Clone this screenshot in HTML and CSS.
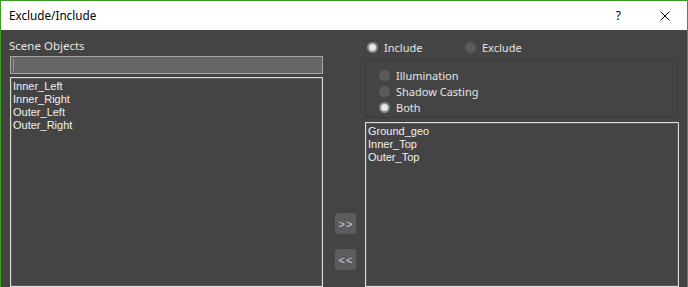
FILE: index.html
```html
<!DOCTYPE html>
<html lang="en">
<head>
    <meta charset="UTF-8">
    <title>Exclude/Include</title>
    <link rel="stylesheet" href="styles.css">
</head>
<body>
    <div class="window">
        <div class="titlebar">
            <span class="title">Exclude/Include</span>
            <span class="help">?</span>
            <svg class="close" width="10" height="10" viewBox="0 0 10 10">
                <path d="M0.5 0.5 L9.5 9.5 M9.5 0.5 L0.5 9.5" stroke="#000" stroke-width="1" fill="none"/>
            </svg>
        </div>

        <div class="content">
            <div class="left-col">
                <div class="label">Scene Objects</div>
                <div class="search"><span class="caret"></span></div>
                <ul class="listbox">
                    <li>Inner_Left</li>
                    <li>Inner_Right</li>
                    <li>Outer_Left</li>
                    <li>Outer_Right</li>
                </ul>
            </div>

            <div class="mid-col">
                <button class="move">&gt;&gt;</button>
                <button class="move">&lt;&lt;</button>
            </div>

            <div class="right-col">
                <div class="mode-row">
                    <label class="radio"><span class="dot on"></span>Include</label>
                    <label class="radio"><span class="dot"></span>Exclude</label>
                </div>
                <div class="groupbox">
                    <label class="radio"><span class="dot"></span>Illumination</label>
                    <label class="radio"><span class="dot"></span>Shadow Casting</label>
                    <label class="radio"><span class="dot on"></span>Both</label>
                </div>
                <ul class="listbox">
                    <li>Ground_geo</li>
                    <li>Inner_Top</li>
                    <li>Outer_Top</li>
                </ul>
            </div>
        </div>
    </div>
</body>
</html>
```

FILE: styles.css
```css
html, body {
    margin: 0;
    padding: 0;
    height: 100%;
    overflow: hidden;
}

body {
    font-family: 'Liberation Sans', Arial, sans-serif;
    background: #444444;
}

.window {
    height: 100%;
    box-sizing: border-box;
    border: 1px solid #3d9a25;
    border-bottom: none;
    display: flex;
    flex-direction: column;
}

.titlebar {
    height: 29px;
    background: #ffffff;
    display: flex;
    align-items: center;
    padding-left: 8px;
    color: #000;
}

.title {
    font-family: 'Noto Sans', sans-serif;
    font-size: 11.7px;
    flex: 1;
    padding-bottom: 1px;
}

.help {
    font-family: 'Noto Sans', sans-serif;
    font-size: 12px;
    margin-right: 39px;
}

.close {
    margin-right: 17px;
}

.content {
    flex: 1;
    display: flex;
    padding: 0 8px 0 9px;
    background: #444444;
    color: #e6e6e6;
    font-size: 11px;
}

.left-col {
    width: 313px;
    display: flex;
    flex-direction: column;
}

.label {
    font-family: 'Noto Sans', sans-serif;
    font-size: 11.5px;
    height: 16px;
    line-height: 16px;
    margin-top: 8px;
    margin-left: -1px;
}

.search {
    height: 16px;
    margin-top: 2px;
    background: #666666;
    border: 1px solid #a8a8a8;
    position: relative;
}

.caret {
    position: absolute;
    left: 2px;
    top: 2px;
    width: 1px;
    height: 12px;
    background: #9a9a9a;
}

.listbox {
    list-style: none;
    margin: 3px 0 0;
    padding: 2px 1px;
    flex: 1;
    box-sizing: border-box;
    border: 1px solid #dcdcdc;
    box-shadow: inset 0 0 0 1px #5a5a5a;
    color: #f2f2f2;
}

.listbox li {
    height: 13px;
    line-height: 13px;
    padding-left: 1px;
}

.mid-col {
    width: 42px;
    display: flex;
    flex-direction: column;
    padding-top: 183px;
    padding-left: 12px;
    box-sizing: border-box;
}

.move {
    width: 21px;
    height: 21px;
    padding: 0;
    margin-bottom: 15px;
    border: none;
    border-radius: 3px;
    background: #5c5c5c;
    color: #c9d0da;
    font-family: 'Liberation Sans', sans-serif;
    font-size: 11px;
    letter-spacing: 1px;
    text-indent: 1px;
}

.right-col {
    width: 314px;
    display: flex;
    flex-direction: column;
}

.mode-row {
    display: flex;
    height: 16px;
    margin-top: 9px;
    padding-left: 2px;
}

.mode-row .radio:first-child {
    width: 98px;
}

.radio {
    display: flex;
    align-items: center;
    font-family: 'Noto Sans', sans-serif;
    font-size: 11px;
    height: 16px;
    color: #e6e6e6;
}

.dot {
    width: 11px;
    height: 11px;
    border-radius: 50%;
    background: #5a5a5a;
    margin-right: 6px;
    box-sizing: border-box;
}

.dot.on {
    background: #e8e8e8;
    border: 2px solid #8a8a8a;
}

.groupbox {
    margin-top: 4px;
    width: 313px;
    height: 59px;
    box-sizing: border-box;
    border: 1px solid #393939;
    border-radius: 3px;
    padding: 7px 0 0 13px;
    display: flex;
    flex-direction: column;
}

.right-col .listbox {
    margin-top: 4px;
}
```
